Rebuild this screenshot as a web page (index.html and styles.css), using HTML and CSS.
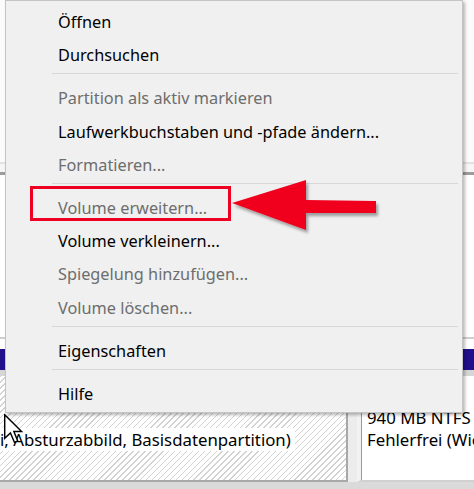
FILE: index.html
```html
<!DOCTYPE html>
<html lang="de">
<head>
<meta charset="utf-8">
<title>Kontextmenü</title>
<link rel="stylesheet" href="styles.css">
</head>
<body>
<div class="screen">
  <div class="bg">
    <div class="band band-top"></div>
    <div class="band band-line1"></div>
    <div class="band band-gap"></div>
    <div class="band band-split"></div>
    <div class="band band-list"></div>
    <div class="band band-line2"></div>
    <div class="band band-white"></div>
    <div class="band band-bar"></div>
    <div class="band band-bargap"></div>
    <div class="parts">
      <div class="part part-hatch">
        <div class="part-line part-line-hidden">&nbsp;</div>
        <div class="part-line"><span class="txt-bg">i, Absturzabbild, Basisdatenpartition)</span></div>
      </div>
      <div class="part-gap"></div>
      <div class="part part-plain">
        <div class="part-line">940 MB NTFS</div>
        <div class="part-line">Fehlerfrei (Wiederherstellungspartition)</div>
      </div>
    </div>
    <div class="band band-bottom"></div>
  </div>

  <div class="menu">
    <div class="item">Öffnen</div>
    <div class="item">Durchsuchen</div>
    <div class="sep"></div>
    <div class="item disabled">Partition als aktiv markieren</div>
    <div class="item">Laufwerkbuchstaben und -pfade ändern...</div>
    <div class="item disabled">Formatieren...</div>
    <div class="sep"></div>
    <div class="item disabled">Volume erweitern...</div>
    <div class="item">Volume verkleinern...</div>
    <div class="item disabled">Spiegelung hinzufügen...</div>
    <div class="item disabled">Volume löschen...</div>
    <div class="sep"></div>
    <div class="item">Eigenschaften</div>
    <div class="sep"></div>
    <div class="item">Hilfe</div>
  </div>

  <div class="highlight"></div>

  <svg class="arrow" width="170" height="70" viewBox="0 0 170 70">
    <defs>
      <filter id="sh" x="-10%" y="-20%" width="130%" height="150%">
        <feDropShadow dx="2" dy="3" stdDeviation="1.6" flood-color="#000" flood-opacity="0.35"/>
      </filter>
    </defs>
    <polygon filter="url(#sh)" fill="#f0001e" points="7,28 81,5 81,25 151,26 151,38 81,38 81,55"/>
  </svg>

  <svg class="cursor" width="20" height="30" viewBox="0 0 14 21">
    <path d="M0.5 0.5 L0.5 17 L4.5 13.2 L7.3 19.8 L9.6 18.8 L6.9 12.3 L12.3 12.3 Z" fill="#fff" stroke="#000" stroke-width="1" stroke-linejoin="miter"/>
  </svg>
</div>
</body>
</html>
```

FILE: styles.css
```css
html, body {
  margin: 0;
  padding: 0;
}
body {
  width: 474px;
  height: 489px;
  overflow: hidden;
  font-family: "Noto Sans", "Open Sans", sans-serif;
  font-size: 16.3px;
}
.screen {
  position: relative;
  width: 474px;
  height: 489px;
  overflow: hidden;
  background: #fff;
}
.bg {
  display: flex;
  flex-direction: column;
  width: 474px;
  height: 489px;
}
.band { flex: none; }
.band-top { height: 162px; background: #fbfbfb; }
.band-line1 { height: 2px; background: #e2e2e2; }
.band-gap { height: 8px; background: #f6f6f6; }
.band-split { height: 3px; background: #9c9c9c; }
.band-list { height: 162px; background: #ffffff; }
.band-line2 { height: 2px; background: #cfcfcf; }
.band-white { height: 10px; background: #ffffff; }
.band-bar { height: 21px; background: #21108b; }
.band-bargap { height: 6px; background: #d6d6d6; }
.parts {
  flex: none;
  height: 106px;
  display: flex;
}
.part {
  box-sizing: border-box;
  padding-top: 31px;
  white-space: nowrap;
  overflow: hidden;
  color: #000;
  font-size: 16.8px;
}
.part-hatch {
  width: 348px;
  background-color: #fff;
  background-image: repeating-linear-gradient(135deg, #d2d2d2 0 1px, #ffffff 1px 4.2px);
  border-right: 2px solid #a8a8a8;
  border-bottom: 2px solid #a8a8a8;
}
.part-gap {
  width: 9px;
  background: #ececec;
}
.part-plain {
  flex: 1;
  background: #fff;
  border-left: 4px solid #f2f2f2;
  box-shadow: inset 1px 0 0 #9a9a9a;
  padding-left: 6px;
  border-bottom: 2px solid #d0d0d0;
}
.part-line {
  height: 22px;
  line-height: 22px;
}
.part-hatch .part-line-hidden { height: 22px; }
.txt-bg {
  background: #fff;
  padding-right: 4px;
}
.band-bottom { flex: 1; background: #dadada; }

.menu {
  position: absolute;
  left: 5px;
  top: 0;
  width: 458px;
  box-sizing: border-box;
  padding: 2px 0 4px 0;
  background: #f0f0f0;
  border: 1px solid #c4c4c4;
  box-shadow: 2px 2px 3px rgba(0, 0, 0, 0.28);
  color: #000;
}
.item {
  box-sizing: border-box;
  height: 33.2px;
  padding: 6px 0 0 52px;
  line-height: 27px;
  white-space: nowrap;
}
.item.disabled { color: #6d6d6d; }
.sep {
  height: 1px;
  margin: 4px 4px 5px 46px;
  background: #d8d8d8;
}

.highlight {
  position: absolute;
  left: 30px;
  top: 186px;
  width: 201px;
  height: 35px;
  box-sizing: border-box;
  border: 3px solid #ee0022;
}
.arrow {
  position: absolute;
  left: 225px;
  top: 175px;
}
.cursor {
  position: absolute;
  left: 4px;
  top: 414px;
}
```
